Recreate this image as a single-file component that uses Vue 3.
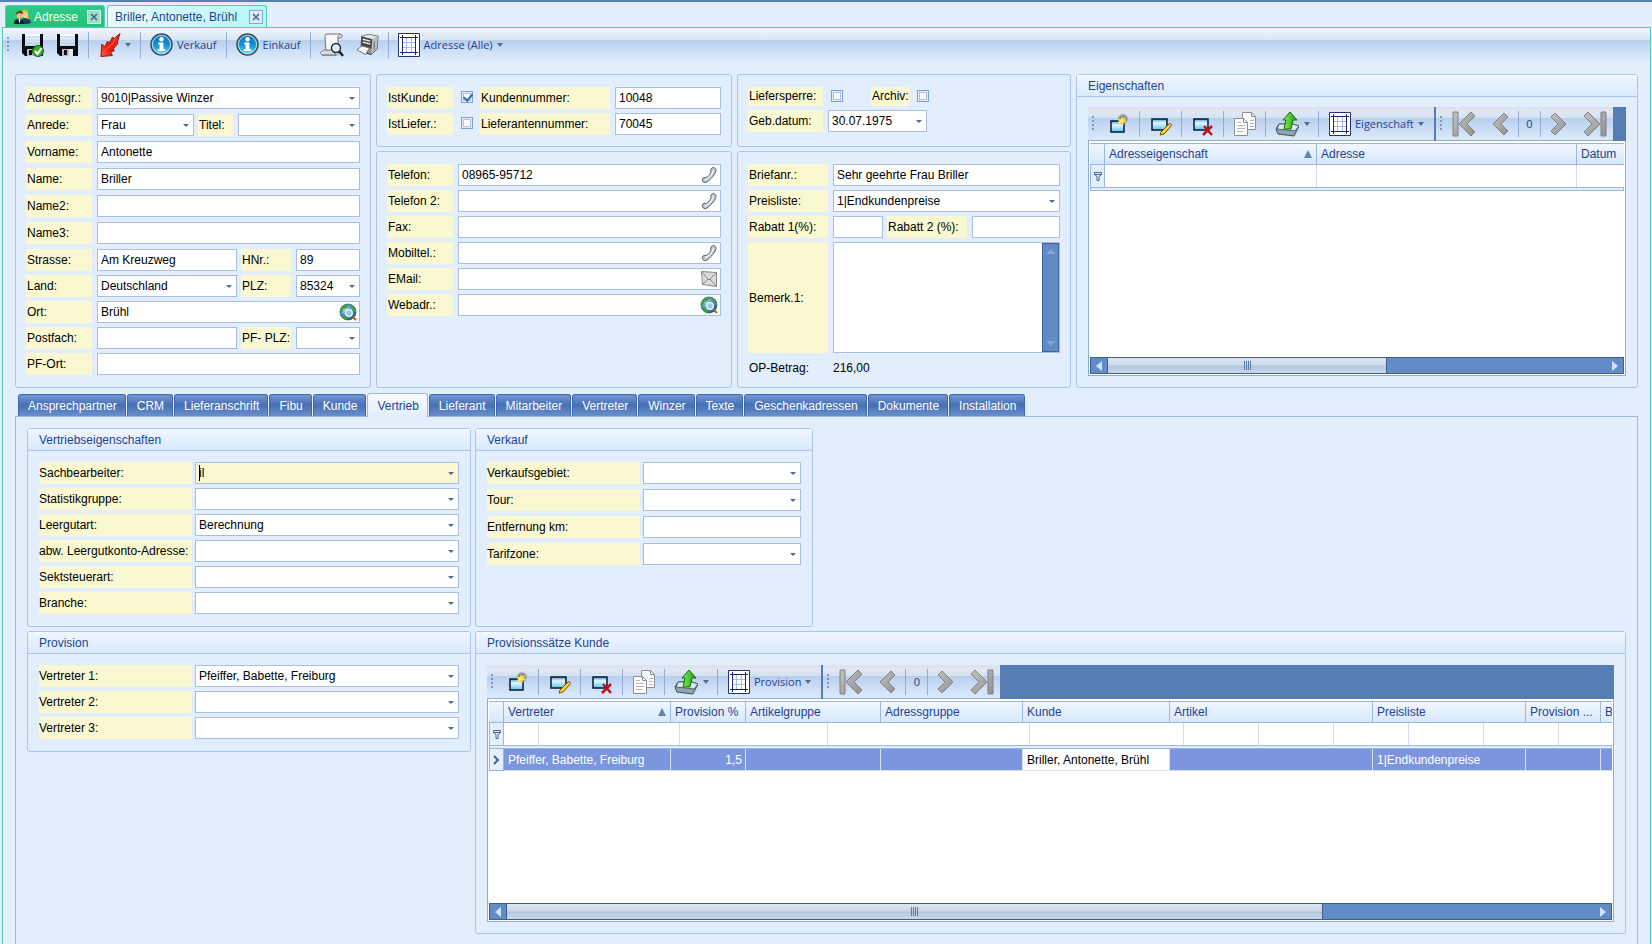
<script setup>
import { h, ref } from 'vue'

const icon = (name, w, hgt) =>
  h('svg', { class: 'icon', width: w, height: hgt, 'aria-hidden': 'true' }, [h('use', { href: '#i-' + name })])

const Icon = (p) => icon(p.name, p.w, p.h)
Icon.props = ['name', 'w', 'h']

// Label plus its control: text box, drop-down or tick box
const Field = (p) => {
  const id = 'f-' + p.id
  let control
  if (p.kind === 'select') {
    control = h('span', { class: 'box' }, [
      h('select', { id }, [h('option', p.value || '')]),
      h('span', { class: 'arrow' }, [icon('caret', 6, 3)]),
      p.active ? h('span', { class: 'cursor' }) : null
    ])
  } else if (p.kind === 'check') {
    control = h('input', { id, type: 'checkbox', class: 'tick', checked: p.value === 'on' })
  } else {
    control = h('span', { class: 'box' }, [
      h('input', { id, type: 'text', value: p.value || '' }),
      p.icon ? h('span', { class: 'inbox' }, [icon(p.icon, 18, 18)]) : null
    ])
  }
  return h('div', { class: ['field', p.active ? 'active' : ''] }, [
    h('label', { class: 'lbl', for: id }, p.label),
    control
  ])
}
Field.props = ['id', 'label', 'kind', 'value', 'icon', 'active']

const activeTab = ref('Vertrieb')
const tabs = ['Ansprechpartner', 'CRM', 'Lieferanschrift', 'Fibu', 'Kunde', 'Vertrieb', 'Lieferant', 'Mitarbeiter', 'Vertreter', 'Winzer', 'Texte', 'Geschenkadressen', 'Dokumente', 'Installation']

const contact = [
  { id: 'tel', label: 'Telefon:', value: '08965-95712', icon: 'phone' },
  { id: 'tel2', label: 'Telefon 2:', icon: 'phone' },
  { id: 'fax', label: 'Fax:' },
  { id: 'mobil', label: 'Mobiltel.:', icon: 'phone' },
  { id: 'email', label: 'EMail:', icon: 'mail' },
  { id: 'web', label: 'Webadr.:', icon: 'globe' }
]
const sales = [
  { id: 'sach', label: 'Sachbearbeiter:', value: 'il', active: true },
  { id: 'stat', label: 'Statistikgruppe:' },
  { id: 'leer', label: 'Leergutart:', value: 'Berechnung' },
  { id: 'abw', label: 'abw. Leergutkonto-Adresse:' },
  { id: 'sekt', label: 'Sektsteuerart:' },
  { id: 'branche', label: 'Branche:' }
]
const selling = [
  { id: 'gebiet', label: 'Verkaufsgebiet:', kind: 'select' },
  { id: 'tour', label: 'Tour:', kind: 'select' },
  { id: 'km', label: 'Entfernung km:', kind: 'text' },
  { id: 'tarif', label: 'Tarifzone:', kind: 'select' }
]
const reps = [
  { id: 'v1', label: 'Vertreter 1:', value: 'Pfeiffer, Babette, Freiburg' },
  { id: 'v2', label: 'Vertreter 2:' },
  { id: 'v3', label: 'Vertreter 3:' }
]
const rateCols = ['Provision %', 'Artikelgruppe', 'Adressgruppe', 'Kunde', 'Artikel', 'Preisliste', 'Provision ...', 'B']
const rateRow = ['Pfeiffer, Babette, Freiburg', '1,5', '', '', 'Briller, Antonette, Brühl', '', '1|Endkundenpreise', '', '']
const tools = [
  { name: 'new', title: 'Neu' },
  { name: 'edit', title: 'Bearbeiten' },
  { name: 'delete', title: 'Löschen' },
  { name: 'copy', title: 'Kopieren' }
]

// Toolbar above a data grid
const GridBar = (p) => h('div', { class: 'gridbar' }, [
  h('div', { class: 'bar' }, [
    h('span', { class: 'grip' }),
    ...tools.flatMap((t) => [
      h('button', { class: 'tool', type: 'button', 'aria-label': t.title }, [icon(t.name, 24, 24)]),
      h('span', { class: 'sep' })
    ]),
    h('button', { class: 'tool wide', type: 'button', 'aria-label': 'Exportieren' }, [icon('export', 24, 26), icon('caret', 6, 4)]),
    h('span', { class: 'sep' }),
    h('button', { class: 'tool named', type: 'button' }, [icon('grid', 22, 24), h('span', p.title), icon('caret', 6, 4)])
  ]),
  h('div', { class: 'bar nav' }, [
    h('span', { class: 'grip' }),
    h('button', { class: 'tool step', type: 'button', 'aria-label': 'Erster' }, [icon('first', 24, 26)]),
    h('button', { class: 'tool step', type: 'button', 'aria-label': 'Voriger' }, [icon('prev', 18, 26)]),
    h('span', { class: 'sep' }),
    h('span', { class: 'count' }, '0'),
    h('span', { class: 'sep' }),
    h('button', { class: 'tool step', type: 'button', 'aria-label': 'Nächster' }, [icon('next', 18, 26)]),
    h('button', { class: 'tool step', type: 'button', 'aria-label': 'Letzter' }, [icon('last', 24, 26)])
  ])
])
GridBar.props = ['title']

const ScrollBar = () => h('div', { class: 'scroll' }, [
  h('button', { type: 'button', 'aria-label': 'Nach links' }, [icon('left', 6, 10)]),
  h('div', { class: 'track' }, [h('div', { class: 'thumb' }, [h('i'), h('i'), h('i'), h('i')])]),
  h('button', { type: 'button', 'aria-label': 'Nach rechts' }, [icon('right', 6, 10)])
])
</script>

<template>
  <div class="app">
    <svg class="sprite" width="0" height="0" aria-hidden="true">
      <defs>
        <linearGradient id="g-blue" x1="0" y1="0" x2="0" y2="1"><stop offset="0" stop-color="#1c6fb4" /><stop offset=".5" stop-color="#0f8fd0" /><stop offset="1" stop-color="#5fd8f7" /></linearGradient>
        <linearGradient id="g-paper" x1="0" y1="0" x2="0" y2="1"><stop offset="0" stop-color="#fff" /><stop offset="1" stop-color="#bcd9ee" /></linearGradient>
        <linearGradient id="g-grey" x1="0" y1="0" x2="1" y2="1"><stop offset="0" stop-color="#c3c3c3" /><stop offset="1" stop-color="#8f9092" /></linearGradient>
        <linearGradient id="g-green" x1="0" y1="0" x2="1" y2="0"><stop offset="0" stop-color="#8df04a" /><stop offset="1" stop-color="#149a18" /></linearGradient>
        <linearGradient id="g-win" x1="0" y1="0" x2="0" y2="1"><stop offset="0" stop-color="#2e9ee0" /><stop offset=".35" stop-color="#e8f8ff" /><stop offset="1" stop-color="#58c4ee" /></linearGradient>
        <linearGradient id="g-red" x1="1" y1="0" x2="0" y2="1"><stop offset="0" stop-color="#ff2a1c" /><stop offset=".6" stop-color="#e81a10" /><stop offset="1" stop-color="#ff5a3c" /></linearGradient>
        <radialGradient id="g-globe" cx=".35" cy=".35" r=".7"><stop offset="0" stop-color="#9fd7f2" /><stop offset="1" stop-color="#1d5c94" /></radialGradient>
        <radialGradient id="g-glow"><stop offset="0" stop-color="#6f7274" /><stop offset=".6" stop-color="#8d9092" /><stop offset="1" stop-color="#a9b4c0" stop-opacity="0" /></radialGradient>
      </defs>
      <symbol id="i-caret" viewBox="0 0 6 4" preserveAspectRatio="none"><path d="M0 0h6L3 4z" fill="#4f6a96" /></symbol>
      <symbol id="i-left" viewBox="0 0 6 10"><path d="M6 0v10L0 5z" fill="#d2e2f7" /></symbol>
      <symbol id="i-right" viewBox="0 0 6 10"><path d="M0 0v10l6-5z" fill="#d2e2f7" /></symbol>
      <symbol id="i-sort" viewBox="0 0 8 8"><path d="M4 0l4 8H0z" fill="#6482ad" /></symbol>
      <symbol id="i-close" viewBox="0 0 8 8"><path d="M1 1l6 6M7 1L1 7" stroke="#3f6196" stroke-width="1.500" /></symbol>
      <symbol id="i-users" viewBox="0 0 18 16">
        <path d="M7 15c0-5 2-6 4-6s6 1 6 5l-3 1z" fill="#1d3a66" /><path d="M8 2c3-3 7-1 6 3l1 5-5-1z" fill="#e6b528" /><circle cx="11" cy="6" r="3" fill="#f3cd8f" />
        <path d="M0 15c0-4 2-5 5-5s5 2 5 5z" fill="#111c30" /><circle cx="5.500" cy="6.500" r="3" fill="#eebc80" /><path d="M2 6c0-5 7-6 7-1L5 4z" fill="#6b3d12" /><path d="M4.500 10l1 5 1-5z" fill="#fff" />
      </symbol>
      <symbol id="i-save" viewBox="0 0 23 24">
        <path d="M1 1h21v22H4l-3-3z" fill="#0b0c10" /><path d="M4 1h15v12H4z" fill="url(#g-paper)" /><path d="M4 4h15M4 7h15M4 10h15" stroke="#b4cfe2" stroke-width="1" />
        <path d="M6 16h11v7H6z" fill="#b9bdc2" /><path d="M8 17h3v5H8z" fill="#111" /><path d="M13 16h4v7h-4z" fill="#e4e7ea" />
      </symbol>
      <symbol id="i-saveok" viewBox="0 0 23 24">
        <use href="#i-save" width="23" height="24" /><circle cx="17" cy="18" r="5.500" fill="#2fae2d" stroke="#155c15" /><path d="M14 18l2.500 3 4-6" fill="none" stroke="#fff" stroke-width="2" />
      </symbol>
      <symbol id="i-redarrow" viewBox="0 0 24 26">
        <path d="M23 1l-3 9 1 1-5 6 1 2-4 1 2 4-12 1 1-13 3 3 3-6 2 2 3-6 2 1z" fill="url(#g-red)" stroke="#8e120a" stroke-width="1" stroke-linejoin="round" /><path d="M19 5l-5 8-5 4-4 5" fill="none" stroke="#ff6a50" stroke-width="1" />
      </symbol>
      <symbol id="i-info" viewBox="0 0 24 24">
        <circle cx="12" cy="12" r="11" fill="url(#g-blue)" stroke="#3d4d5e" stroke-width="1.500" /><circle cx="12" cy="12" r="9.500" fill="none" stroke="#c8e6f4" stroke-width="1" />
        <circle cx="12" cy="6.500" r="2.300" fill="#fff" /><path d="M8.500 10h5.500v7h2v2h-8v-2h2v-5h-1.500z" fill="#fff" />
      </symbol>
      <symbol id="i-preview" viewBox="0 0 24 24">
        <path d="M6 1h14c-3 2-2 4-2 7l1 11c0 2-1 3-3 3H3c-3 0-3-4 0-4h3L5 5c0-2 0-3 1-4z" fill="#f7f7f7" stroke="#6d7074" stroke-width="1" /><path d="M20 1c3 0 3 4 0 4h-2M2 22h14c-2-1-2-4-1-5H4" fill="#d7d9dc" stroke="#6d7074" />
        <circle cx="16" cy="15" r="4.500" fill="#d9ecfb" stroke="#222a36" stroke-width="1.500" /><path d="M19 18l4 5" stroke="#1f2630" stroke-width="2.500" />
      </symbol>
      <symbol id="i-printer" viewBox="0 0 24 24">
        <path d="M6 3l7-2 10 2-1 13-6 6-11-3z" fill="#8c9094" stroke="#33373b" /><path d="M6 3l7-2 10 2-6 3z" fill="#e5e7e9" /><path d="M6 3l11 3-1 10-10-3z" fill="#42464b" /><path d="M7 6l8 2M7 9l8 2" stroke="#e8e8e8" stroke-width="1.500" />
        <path d="M17 6l6-3-1 13-6 6z" fill="#b9bdc0" /><path d="M19 8v9" stroke="#6a6e72" /><path d="M1 17l5-4 8 2-4 7z" fill="#fafafa" stroke="#6b7075" />
      </symbol>
      <symbol id="i-grid" viewBox="0 0 22 24">
        <path d="M.5.500h21v23H.500z" fill="#fff" stroke="#26336a" /><path d="M8.500 4v16M13.500 4v16M4 9.500h14M4 14.500h14" stroke="#a3bbea" /><path d="M4.500 2v20M17.500 2v20M2 4.500h18M2 19.500h18" stroke="#17247a" />
      </symbol>
      <symbol id="i-new" viewBox="0 0 24 24">
        <path d="M4 9h13v11H4z" fill="url(#g-win)" stroke="#0a1a2c" stroke-width="1.500" /><circle cx="16" cy="7" r="6" fill="url(#g-glow)" /><path d="M15 4l1 2 3-1-1 3 2 2-3 0-1 3-2-2-4 1 2-3-1-2 3 0z" fill="#ffd83a" /><path d="M14 7l2 2-4 3z" fill="#fff1a0" />
      </symbol>
      <symbol id="i-edit" viewBox="0 0 24 24">
        <path d="M3 7h15v11H3z" fill="url(#g-win)" stroke="#0a1a2c" stroke-width="1.500" /><path d="M21 11l2 2-8 9-4 1 1-3z" fill="#f8d428" stroke="#7a4e0a" /><path d="M21 11l2 2-1 1-2-2z" fill="#e48a8a" />
      </symbol>
      <symbol id="i-delete" viewBox="0 0 24 24">
        <path d="M3 7h14v11H3z" fill="url(#g-win)" stroke="#0a1a2c" stroke-width="1.500" /><path d="M13 14l8 9M21 14l-9 9" stroke="#c20f18" stroke-width="2.500" />
      </symbol>
      <symbol id="i-copy" viewBox="0 0 24 24">
        <path d="M9.500.500h9l4 4v13h-13z" fill="#fafcff" stroke="#8c8e94" /><path d="M18.500.500v4h4" fill="none" stroke="#8c8e94" /><path d="M1.500 6.500h9l4 4v13h-13z" fill="#fff" stroke="#8c8e94" /><path d="M10.500 6.500v4h4" fill="none" stroke="#8c8e94" />
        <path d="M4 10.500h4M4 13.500h8M4 16.500h8M4 19.500h6M17 8.500h4M17 11.500h4M17 14.500h4" stroke="#b3b6bc" />
      </symbol>
      <symbol id="i-export" viewBox="0 0 24 26">
        <path d="M4 13h14l6 2-5 10-16-2-2-5z" fill="#8fa6b2" stroke="#3b4c56" /><path d="M4 13h14l6 2-4 5-18-2z" fill="#dce7ee" stroke="#50626c" /><path d="M15 1l7 8h-4l-2 9H9l2-9H8z" fill="url(#g-green)" stroke="#106a12" />
      </symbol>
      <symbol id="i-first" viewBox="0 0 24 26"><path d="M1 1h5v24H1zM19 1l4 4-8 8 8 8-4 4L7 13z" fill="url(#g-grey)" stroke="#808286" /></symbol>
      <symbol id="i-last" viewBox="0 0 24 26"><path d="M18 1h5v24h-5zM5 1L1 5l8 8-8 8 4 4 12-12z" fill="url(#g-grey)" stroke="#808286" /></symbol>
      <symbol id="i-prev" viewBox="0 0 18 26"><path d="M13 2l4 4-7 7 7 7-4 4L2 13z" fill="url(#g-grey)" stroke="#808286" /></symbol>
      <symbol id="i-next" viewBox="0 0 18 26"><path d="M5 2L1 6l7 7-7 7 4 4 11-11z" fill="url(#g-grey)" stroke="#808286" /></symbol>
      <symbol id="i-phone" viewBox="0 0 18 18">
        <path d="M11 3c2-3 5-1 5 1 0 4-5 9-9 12-3 2-6-1-4-4 1-1 3 0 4-1 2-1 3-3 4-5 0-1-1-2 0-3z" fill="#b9c1c9" stroke="#5d666e" /><path d="M13 4c1 3-4 8-8 10" fill="none" stroke="#eef1f3" stroke-width="1.500" />
      </symbol>
      <symbol id="i-mail" viewBox="0 0 18 18"><path d="M1.500 1.500l15 1v14l-14-2z" fill="#dadbdc" stroke="#85878a" /><path d="M2 2l7 8 7-7M3 14l5-5M16 16l-6-7" fill="none" stroke="#85878a" /></symbol>
      <symbol id="i-globe" viewBox="0 0 18 18">
        <circle cx="9" cy="9" r="8" fill="url(#g-globe)" stroke="#1f4a5a" stroke-width=".7" /><path d="M1 8c1-4 5-7 9-6l-3 3-3 1-1 4zM12 2c3 1 5 4 5 8l-4-4zM3 11l4 2 1 4c-3 0-5-3-5-6z" fill="#3ba23c" />
        <circle cx="10" cy="10" r="3.300" fill="#9fc6e2" stroke="#f2f6f8" stroke-width="1.300" /><path d="M13 13l4 4" stroke="#8a6a24" stroke-width="2" />
      </symbol>
      <symbol id="i-filter" viewBox="0 0 8 10"><path d="M.5 1.500h7v2l-2.500 2v4H3v-4l-2.500-2zM.500 3.500h7" fill="none" stroke="#46669c" /></symbol>
      <symbol id="i-row" viewBox="0 0 8 10"><path d="M1 1l4 4-4 4" fill="none" stroke="#41619a" stroke-width="2" /></symbol>
    </svg>

    <nav class="windows">
      <div class="wtab green"><Icon name="users" w="18" h="16" /><span>Adresse</span><button type="button" class="close" aria-label="Adresse schließen"><Icon name="close" w="8" h="8" /></button></div>
      <div class="wtab cyan"><span>Briller, Antonette, Brühl</span><button type="button" class="close" aria-label="Briller schließen"><Icon name="close" w="8" h="8" /></button></div>
    </nav>

    <div class="shell">
      <div class="mainbar">
        <span class="grip"></span>
        <button type="button" aria-label="Speichern und schließen"><Icon name="saveok" w="23" h="24" /></button>
        <button type="button" aria-label="Speichern"><Icon name="save" w="23" h="24" /></button>
        <span class="sep"></span>
        <button type="button" aria-label="Aktionen"><Icon name="redarrow" w="23" h="26" /><Icon name="caret" w="6" h="4" /></button>
        <span class="sep"></span>
        <button type="button"><Icon name="info" w="23" h="23" /><span>Verkauf</span></button>
        <span class="sep"></span>
        <button type="button"><Icon name="info" w="23" h="23" /><span>Einkauf</span></button>
        <span class="sep"></span>
        <button type="button" aria-label="Vorschau"><Icon name="preview" w="24" h="24" /></button>
        <button type="button" aria-label="Drucken"><Icon name="printer" w="23" h="24" /></button>
        <span class="sep"></span>
        <button type="button"><Icon name="grid" w="22" h="24" /><span>Adresse (Alle)</span><Icon name="caret" w="6" h="4" /></button>
      </div>

      <main>
        <div class="top">
          <section class="panel form address">
            <div class="group loose">
              <div class="row"><Field id="gr" label="Adressgr.:" kind="select" value="9010|Passive Winzer" /></div>
              <div class="row"><Field id="anrede" class="short" label="Anrede:" kind="select" value="Frau" /><Field id="titel" class="narrow" label="Titel:" kind="select" /></div>
              <div class="row"><Field id="vor" label="Vorname:" value="Antonette" /></div>
              <div class="row"><Field id="name" label="Name:" value="Briller" /></div>
              <div class="row"><Field id="name2" label="Name2:" /></div>
              <div class="row"><Field id="name3" label="Name3:" /></div>
            </div>
            <div class="group">
              <div class="row"><Field id="str" class="long" label="Strasse:" value="Am Kreuzweg" /><Field id="hnr" class="mid" label="HNr.:" value="89" /></div>
              <div class="row"><Field id="land" class="long" label="Land:" kind="select" value="Deutschland" /><Field id="plz" class="mid" label="PLZ:" kind="select" value="85324" /></div>
              <div class="row"><Field id="ort" label="Ort:" value="Brühl" icon="globe" /></div>
              <div class="row"><Field id="pf" class="long" label="Postfach:" /><Field id="pfplz" class="mid" label="PF- PLZ:" kind="select" /></div>
              <div class="row"><Field id="pfort" label="PF-Ort:" /></div>
            </div>
          </section>

          <div class="stack">
            <section class="panel form">
              <div class="row"><Field id="istk" class="flag" label="IstKunde:" kind="check" value="on" /><Field id="knr" class="number" label="Kundennummer:" value="10048" /></div>
              <div class="row"><Field id="istl" class="flag" label="IstLiefer.:" kind="check" /><Field id="lnr" class="number" label="Lieferantennummer:" value="70045" /></div>
            </section>
            <section class="panel form grow">
              <div v-for="f in contact" :key="f.id" class="row"><Field v-bind="f" /></div>
            </section>
          </div>

          <div class="stack">
            <section class="panel form block">
              <div class="row low"><Field id="sperre" class="flag lock" label="Liefersperre:" kind="check" /><Field id="archiv" class="flag arch" label="Archiv:" kind="check" /></div>
              <div class="row"><Field id="geb" class="date" label="Geb.datum:" kind="select" value="30.07.1975" /></div>
            </section>
            <section class="panel form letter grow">
              <div class="row"><Field id="brief" label="Briefanr.:" value="Sehr geehrte Frau Briller" /></div>
              <div class="row"><Field id="preis" label="Preisliste:" kind="select" value="1|Endkundenpreise" /></div>
              <div class="row"><Field id="rab1" class="rebate" label="Rabatt 1(%):" /><Field id="rab2" label="Rabatt 2 (%):" /></div>
              <div class="memo">
                <label for="f-bem">Bemerk.1:</label>
                <div class="memobox">
                  <textarea id="f-bem"></textarea>
                  <div class="vscroll"><span class="up"></span><span class="down"></span></div>
                </div>
              </div>
              <div class="sum"><span>OP-Betrag:</span><output>216,00</output></div>
            </section>
          </div>

          <section class="panel titled props">
            <h2>Eigenschaften</h2>
            <div class="body">
              <GridBar title="Eigenschaft" />
              <div class="grid">
                <table>
                  <colgroup><col class="c-ind" /><col class="c-212" /><col class="c-260" /><col /></colgroup>
                  <thead>
                    <tr><th></th><th><span class="sorted">Adresseigenschaft<Icon name="sort" w="8" h="8" /></span></th><th>Adresse</th><th>Datum</th></tr>
                  </thead>
                  <tbody>
                    <tr class="filter"><td class="ind"><Icon name="filter" w="8" h="10" /></td><td></td><td></td><td></td></tr>
                    <tr class="band"><td colspan="4"></td></tr>
                  </tbody>
                </table>
                <div class="space"></div>
                <ScrollBar />
              </div>
            </div>
          </section>
        </div>

        <div class="tabs" role="tablist">
          <button v-for="t in tabs" :key="t" type="button" role="tab" :aria-selected="t === activeTab" :class="{ on: t === activeTab }" @click="activeTab = t">{{ t }}</button>
        </div>

        <div class="page">
          <section class="panel titled sales">
            <h2>Vertriebseigenschaften</h2>
            <div class="body rows"><Field v-for="f in sales" :key="f.id" v-bind="f" kind="select" /></div>
          </section>
          <section class="panel titled selling">
            <h2>Verkauf</h2>
            <div class="body rows"><Field v-for="f in selling" :key="f.id" v-bind="f" /></div>
          </section>
          <section class="panel titled reps">
            <h2>Provision</h2>
            <div class="body rows"><Field v-for="f in reps" :key="f.id" v-bind="f" kind="select" /></div>
          </section>
          <section class="panel titled rates">
            <h2>Provisionssätze Kunde</h2>
            <div class="body">
              <GridBar title="Provision" />
              <div class="grid">
                <table>
                  <colgroup><col class="c-ind" /><col class="c-167" /><col class="c-75" /><col class="c-135" /><col class="c-142" /><col class="c-147" /><col class="c-203" /><col class="c-153" /><col class="c-75" /><col /></colgroup>
                  <thead>
                    <tr><th></th><th><span class="sorted">Vertreter<Icon name="sort" w="8" h="8" /></span></th><th v-for="c in rateCols" :key="c">{{ c }}</th></tr>
                  </thead>
                  <tbody>
                    <tr class="filter"><td class="ind"><Icon name="filter" w="8" h="10" /></td><td colspan="9"><div class="cells"><span v-for="n in 11" :key="n"></span></div></td></tr>
                    <tr class="band"><td colspan="10"></td></tr>
                    <tr class="data"><td class="ind"><Icon name="row" w="8" h="10" /></td><td v-for="(v, i) in rateRow" :key="i" :class="{ num: i === 1, focus: i === 4 }">{{ v }}</td></tr>
                  </tbody>
                </table>
                <div class="space"></div>
                <ScrollBar />
              </div>
            </div>
          </section>
        </div>
      </main>
    </div>
  </div>
</template>

<style>
body { background: #e2eefe; }
</style>

<style scoped>
.app {
  position: relative;
  display: flex;
  flex-direction: column;
  box-sizing: border-box;
  min-height: 100vh;
  border-top: 2px solid #5580b8;
  background: #e2eefe;
  color: #000;
  font: 12px/16px "Liberation Sans", Arial, sans-serif;
}
.app :deep(*) { box-sizing: border-box; }
.sprite { position: absolute; }
.app :deep(.icon) { display: block; flex: none; }
.app :deep(button) { font: inherit; margin: 0; padding: 0; border: 0; background: none; color: inherit; }

/* window tabs */
.windows { display: flex; gap: 2px; padding: 3px 0 0 5px; height: 25px; }
.wtab { display: flex; align-items: center; border: 1px solid #4fd0b4; border-bottom: 0; border-radius: 3px 3px 0 0; }
.green { background: linear-gradient(#2fc985, #22c277); color: #fff; padding: 0 3px 0 8px; gap: 2px; width: 100px; }
.cyan { background: linear-gradient(100deg, #e9fbfb, #b4f6f5); color: #1f4390; padding: 0 3px 0 7px; width: 160px; }
.wtab span { flex: 1; white-space: nowrap; }
.wtab .close { display: flex; align-items: center; justify-content: center; width: 14px; height: 14px; border: 1px solid #86a9d3; background: #dcebfa; }
.green .close { background: #9fdcc4; border-color: #d2f0e4; }

.shell { flex: 1; display: flex; flex-direction: column; margin: 0 1px 0 2px; border: solid #54cdb4; border-width: 1px 1px 0; }

.mainbar, .app :deep(.bar) { display: flex; align-items: center; color: #1f4390; }
.mainbar {
  height: 33px;
  font: 11px/16px "Open Sans", "Noto Sans", sans-serif;
  background: linear-gradient(#f1f6fd 0, #d9e5f4 12px, #b9cfed 12px, #cfe1f8 24px, #dfecfd 33px);
}
.mainbar button { display: flex; align-items: center; gap: 4px; height: 28px; padding: 0 6px; white-space: nowrap; }
.mainbar .sep { width: 1px; height: 26px; margin: 0 3px; background: #93add1; }
.mainbar .grip, .app :deep(.grip) { flex: none; width: 2px; height: 16px; margin: 0 6px 0 4px; background: repeating-linear-gradient(#7d98c4 0 2px, transparent 2px 4px); }

main { flex: 1; display: flex; flex-direction: column; padding: 13px 12px 0; }
.top { display: grid; grid-template-columns: 356fr 356fr 334fr 562fr; gap: 5px; }
.top > * { min-width: 0; }
.stack { display: flex; flex-direction: column; gap: 4px; }
.grow { flex: 1; }
.panel { display: flex; flex-direction: column; min-width: 0; border: 1px solid #aac5e7; border-radius: 3px; }
.form { --lw: 66px; --lg: 5px; gap: 4px; padding: 12px 10px 11px; }
.address { gap: 5px; }
.group { display: flex; flex-direction: column; gap: 4px; }
.loose { gap: 5px; }
.letter { --lw: 80px; padding-bottom: 8px; }
.block { --lw: 75px; padding-bottom: 14px; }
.row { display: flex; gap: 4px; }

.app :deep(.field) { display: flex; flex: 1; gap: var(--lg); min-width: 0; }
.app :deep(.lbl), .memo label { flex: none; width: var(--lw); height: 22px; padding: 3px 0 0 1px; background: #f9f8d0; white-space: nowrap; }
.app :deep(.box) { position: relative; display: flex; align-items: center; flex: 1; min-width: 0; height: 22px; border: 1px solid #a8bfdf; background: #fff; }
.app :deep(.box input), .app :deep(.box select) { flex: 1; width: 0; min-width: 0; height: 20px; margin: 0; padding: 0 3px; border: 0; border-radius: 0; outline: 0; background: transparent; color: #000; font: inherit; appearance: none; }
.app :deep(.arrow) { position: absolute; right: 4px; top: 9px; pointer-events: none; }
.app :deep(.inbox) { padding-right: 2px; }
.app :deep(.active .box) { background: #f9f8d0; }
.app :deep(.cursor) { position: absolute; left: 3px; top: 2px; width: 1px; height: 16px; background: #000; }
.app :deep(.tick) { position: relative; flex: none; width: 12px; height: 12px; margin: 4px 0 0 3px; border: 1px solid #7f9fd2; background: #fff; box-shadow: inset 0 0 0 1px #e2eefe, inset 0 0 0 2px #aac0e0; appearance: none; }
.app :deep(.tick:checked::after) { content: ""; position: absolute; left: 3px; top: 0; width: 4px; height: 7px; border: solid #2f6bb0; border-width: 0 2px 2px 0; transform: rotate(40deg); }

.app .short { flex: 0 0 168px; }
.app .long { flex: 0 0 211px; }
.app .narrow { --lw: 35px; }
.app .mid { --lw: 50px; }
.app .flag { flex: 0 0 89px; }
.app .number { --lw: 130px; }
.app .lock { flex-basis: 119px; }
.app .arch { --lw: 38px; }
.app .date { flex: 0 0 179px; }
.app .rebate { flex: 0 0 135px; }
.low { height: 19px; }
.low :deep(.lbl) { height: 19px; padding-top: 1px; }
.low :deep(.tick) { margin-top: 3px; }

.memo { display: flex; gap: 5px; height: 111px; }
.memo label { display: flex; align-items: center; height: auto; padding: 0 0 0 1px; }
.memobox { display: flex; flex: 1; min-width: 0; border: 1px solid #a8bfdf; background: #fff; }
.memobox textarea { flex: 1; min-width: 0; border: 0; padding: 3px; outline: 0; resize: none; background: transparent; font: inherit; }
.vscroll { display: flex; flex-direction: column; align-items: center; justify-content: space-between; width: 17px; padding: 5px 0; border: 1px solid #3e62a3; background: #628bc6; }
.vscroll span { width: 0; border: 5px solid transparent; }
.vscroll .up { border-top: 0; border-bottom-color: #7fa5da; }
.vscroll .down { border-bottom: 0; border-top-color: #7fa5da; }
.sum { display: flex; align-items: center; gap: 5px; height: 22px; }
.sum span { width: 80px; padding-left: 1px; }

.titled h2 { height: 22px; margin: 0; padding: 3px 11px; border-bottom: 1px solid #aac5e7; background: linear-gradient(#f0f7ff, #d9e9fc); color: #1f4390; font: inherit; }
.titled .body { display: flex; flex: 1; flex-direction: column; padding: 11px; min-width: 0; }
.props .body { padding-top: 10px; }

/* data grids */
.app :deep(.gridbar) { display: flex; height: 34px; background: #557db3; }
.app :deep(.bar) { flex: none; font: 11px/16px "Open Sans", "Noto Sans", sans-serif; background: linear-gradient(#dbe2ec 0, #dfe8f4 5px, #d5e1f1 11px, #b7ceec 11px, #cfe0f7 24px, #dbe9fc 33px, #93add0 33px); }
.app :deep(.bar .grip) { margin: 0 4px; }
.app :deep(.bar .sep) { width: 1px; height: 26px; background: #93add1; }
.app :deep(.tool) { display: flex; align-items: center; justify-content: center; width: 41px; height: 32px; }
.app :deep(.wide) { width: 52px; gap: 5px; }
.app :deep(.named) { width: auto; padding: 0 10px; gap: 4px; white-space: nowrap; }
.app :deep(.nav) { margin-left: 2px; }
.app :deep(.step) { width: 36px; }
.app :deep(.count) { width: 21px; text-align: center; }

.grid { display: flex; flex: 1; flex-direction: column; min-width: 0; padding: 2px 1px 1px; border: 1px solid #8eadd4; border-top: 0; background: #fff; overflow: hidden; }
table { width: 100%; table-layout: fixed; border-collapse: separate; border-spacing: 0; }
.c-ind { width: 15px; }
.c-75 { width: 75px; }
.c-135 { width: 135px; }
.c-142 { width: 142px; }
.c-147 { width: 147px; }
.c-153 { width: 153px; }
.c-167 { width: 167px; }
.c-203 { width: 203px; }
.c-212 { width: 212px; }
.c-260 { width: 260px; }
th, td { height: 22px; padding: 0 4px; overflow: hidden; white-space: nowrap; text-align: left; font-weight: 400; }
th { border: solid #9bb7de; border-width: 1px 1px 1px 0; background: linear-gradient(#f1f7ff, #d6e7fc); color: #1f4390; }
th:last-child, .filter td:last-child { border-right: 0; }
.sorted { display: flex; align-items: center; justify-content: space-between; }
.filter td { border-right: 1px solid #cfdcee; }
td.ind { padding: 0 3px; border: solid #9bb7de; border-width: 0 1px 0 1px; background: #e4effd; }
.filter td[colspan] { padding: 0; }
.cells { display: grid; grid-template-columns: 35px 141px 148px 202px 154px 75px 75px 75px 75px 75px 1fr; height: 22px; }
.cells span { border-right: 1px solid #cfdcee; }
.cells span:last-child { border: 0; }
.band td { height: 4px; padding: 0; border: 1px solid #9bb7de; background: #e2eefe; }
.data td { height: 22px; border-right: 1px solid #d5e1f5; border-bottom: 1px solid #d5e1f5; background: #7b96de; color: #fff; }
.data td.ind { border: solid #9bb7de; border-width: 0 1px 1px; background: #e4effd; }
.data td.num { padding-right: 3px; text-align: right; }
.data td.focus { background: #fff; color: #000; }
.data td:last-child { border-right: 0; }
.space { flex: 1; }

.app :deep(.scroll) { display: flex; height: 17px; border: 1px solid #3e5f94; background: #628cc8; }
.app :deep(.scroll button) { display: flex; align-items: center; justify-content: center; width: 16px; }
.app :deep(.track) { flex: 1; }
.app :deep(.thumb) { display: flex; align-items: center; justify-content: center; gap: 1px; width: 56%; height: 15px; border: solid #3e5f94; border-width: 0 1px; background: linear-gradient(#dbe6f1 0, #ccd9e8 7px, #b3c6de 8px, #c8d8ec 15px); }
.app .rates :deep(.thumb) { width: 75%; }
.app :deep(.thumb i) { width: 1px; height: 9px; background: #5c7ba8; }

/* tab strip */
.tabs { display: flex; align-items: flex-end; gap: 1px; height: 28px; padding-left: 3px; }
.tabs button { height: 22px; padding: 1px 8px 0 9px; border: 1px solid #3f68ad; border-bottom: 0; border-radius: 3px 3px 0 0; background: linear-gradient(#7597d2 0, #4670b5 10px, #6a8fcb 21px); color: #fff; white-space: nowrap; }
.tabs .on { position: relative; height: 24px; margin-bottom: -1px; border-color: #9bb9e2; background: linear-gradient(#f6faff, #e2eefe); color: #1f4390; }
.page {
  --lw: 153px;
  --lg: 3px;
  flex: 1;
  display: grid;
  grid-template-columns: minmax(0, 444fr) minmax(0, 338fr) minmax(0, 809fr);
  grid-template-rows: auto 1fr;
  gap: 4px;
  padding: 11px 11px 10px;
  border: 1px solid #9bb9e2;
  border-bottom: 0;
}
.page :deep(.lbl) { padding-left: 0; }
.titled .rows { gap: 4px; padding-bottom: 12px; }
.rows :deep(.field) { flex: none; }
.titled.selling .rows { gap: 5px; }
.reps { grid-column: 1; align-self: start; }
.rates { grid-column: 2 / 4; }
</style>
